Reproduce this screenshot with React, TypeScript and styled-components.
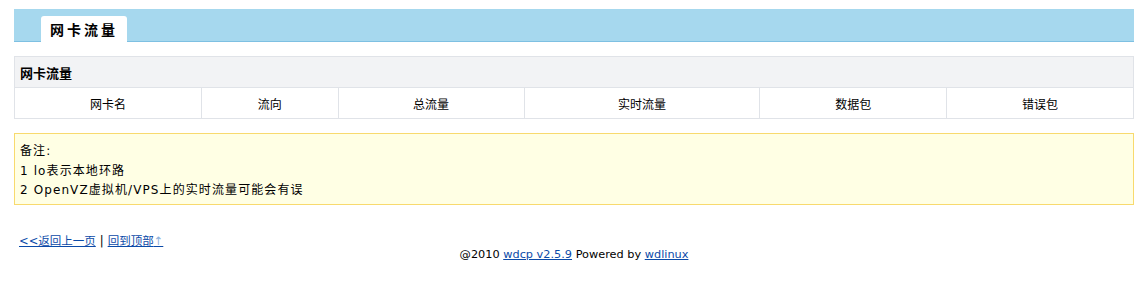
import React from "react";
import styled, { createGlobalStyle } from "styled-components";

const GlobalStyle = createGlobalStyle`
  body {
    margin: 0;
    background: #fff;
    color: #000;
    font-family: "DejaVu Sans", "Noto Sans CJK SC", sans-serif;
    font-size: 12px;
  }
`;

const Page = styled.div`
  padding: 9px 2px 0 14px;
`;

const TabBar = styled.div`
  height: 32px;
  background: #a6d8ee;
  border-bottom: 1px solid #7ec0e2;
  display: flex;
  align-items: flex-end;
  padding-left: 27px;
`;

const Tab = styled.div`
  width: 86px;
  height: 26px;
  margin-bottom: -1px;
  background: #fff;
  border-radius: 3px 3px 0 0;
  display: flex;
  align-items: center;
  justify-content: center;
  font-family: "Noto Sans CJK SC", sans-serif;
  font-size: 14px;
  font-weight: bold;
  letter-spacing: 3px;
`;

const Table = styled.div`
  margin-top: 14px;
  border: 1px solid #e0e3e8;
`;

const Caption = styled.div`
  height: 30px;
  background: #f2f3f5;
  border-bottom: 1px solid #e0e3e8;
  display: flex;
  align-items: center;
  padding-left: 5px;
  font-family: "Noto Sans CJK SC", sans-serif;
  font-weight: bold;
  font-size: 13px;
`;

const HeadRow = styled.div`
  display: grid;
  grid-template-columns: 186fr 137fr 186fr 236fr 187fr 187fr;
  height: 30px;
`;

const HeadCell = styled.div`
  display: flex;
  align-items: center;
  justify-content: center;
  font-family: "Noto Sans CJK SC", sans-serif;
  border-left: 1px solid #e0e3e8;
  &:first-child {
    border-left: none;
  }
`;

const Note = styled.div`
  margin-top: 14px;
  background: #ffffe4;
  border: 1px solid #f8da6e;
  padding: 8px 5px 3px;
  line-height: 19.5px;
  letter-spacing: 1.1px;
`;

const Links = styled.div`
  margin-top: 29px;
  padding-left: 5px;
  line-height: 14px;
  font-size: 11.5px;
`;

const A = styled.a`
  color: #0b4aa8;
  text-decoration: underline;
`;

const Arrow = styled.span`
  color: #8fb3dc;
`;

const Sep = styled.span`
  margin: 0 4px;
`;

const Footer = styled.div`
  text-align: center;
  line-height: 14px;
  font-size: 11.3px;
`;

const cols = ["网卡名", "流向", "总流量", "实时流量", "数据包", "错误包"];

export default function App() {
  return (
    <Page>
      <GlobalStyle />
      <TabBar>
        <Tab>网卡流量</Tab>
      </TabBar>
      <Table>
        <Caption>网卡流量</Caption>
        <HeadRow>
          {cols.map((c) => (
            <HeadCell key={c}>{c}</HeadCell>
          ))}
        </HeadRow>
      </Table>
      <Note>
        <div>备注:</div>
        <div>1 lo表示本地环路</div>
        <div>2 OpenVZ虚拟机/VPS上的实时流量可能会有误</div>
      </Note>
      <Links>
        <A href="#">&lt;&lt;返回上一页</A>
        <Sep>|</Sep>
        <A href="#">
          回到顶部<Arrow>↑</Arrow>
        </A>
      </Links>
      <Footer>
        @2010 <A href="#">wdcp v2.5.9</A> Powered by <A href="#">wdlinux</A>
      </Footer>
    </Page>
  );
}
